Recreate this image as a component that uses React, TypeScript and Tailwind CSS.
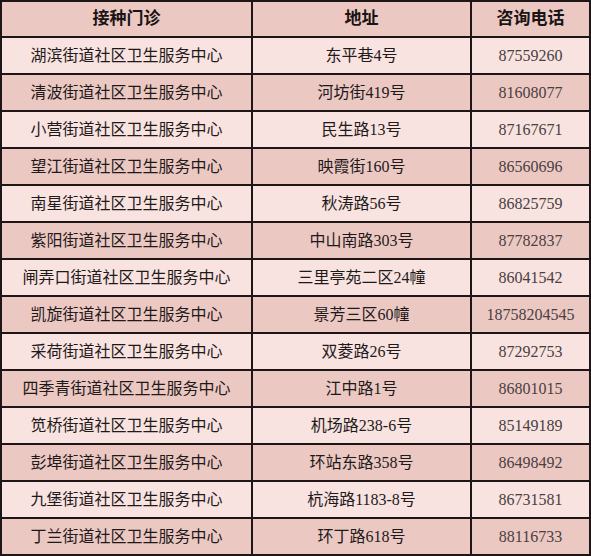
const rows = [
  ["湖滨街道社区卫生服务中心", "东平巷4号", "87559260"],
  ["清波街道社区卫生服务中心", "河坊街419号", "81608077"],
  ["小营街道社区卫生服务中心", "民生路13号", "87167671"],
  ["望江街道社区卫生服务中心", "映霞街160号", "86560696"],
  ["南星街道社区卫生服务中心", "秋涛路56号", "86825759"],
  ["紫阳街道社区卫生服务中心", "中山南路303号", "87782837"],
  ["闸弄口街道社区卫生服务中心", "三里亭苑二区24幢", "86041542"],
  ["凯旋街道社区卫生服务中心", "景芳三区60幢", "18758204545"],
  ["采荷街道社区卫生服务中心", "双菱路26号", "87292753"],
  ["四季青街道社区卫生服务中心", "江中路1号", "86801015"],
  ["笕桥街道社区卫生服务中心", "机场路238-6号", "85149189"],
  ["彭埠街道社区卫生服务中心", "环站东路358号", "86498492"],
  ["九堡街道社区卫生服务中心", "杭海路1183-8号", "86731581"],
  ["丁兰街道社区卫生服务中心", "环丁路618号", "88116733"],
];

export default function App() {
  return (
    <div
      className="w-[591px] h-[556px] bg-white"
      style={{ fontFamily: '"Liberation Serif", "Noto Sans CJK SC", serif' }}
    >
      <div className="grid grid-cols-[249px_217px_117px] gap-[2px] p-[2px] bg-[#1e1616] w-[591px] text-[16px] text-[#1f1a1a]">
        {/* header */}
        {["接种门诊", "地址", "咨询电话"].map((h) => (
          <div key={h} className="h-[34px] flex items-center justify-center bg-[#ecc8c3] font-bold text-[17px] text-[#1a1414]">
            {h}
          </div>
        ))}

        {rows.map((r, i) =>
          r.map((cell, j) => (
            <div
              key={i + "-" + j}
              className={
                "h-[35px] flex items-center justify-center whitespace-nowrap " +
                (i % 2 === 0 ? "bg-[#f8e3e1]" : "bg-[#ecc8c3]")
              }
            >
              <span className={j === 2 ? "text-[#4a4040]" : ""}>{cell}</span>
            </div>
          ))
        )}
      </div>
    </div>
  );
}
